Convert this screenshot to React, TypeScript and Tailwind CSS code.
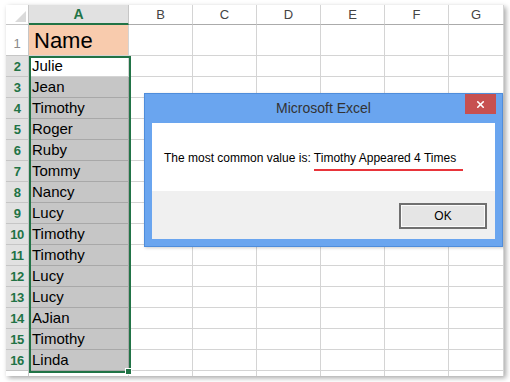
import { X } from "lucide-react";

const cols = ["A", "B", "C", "D", "E", "F", "G"];
const colW = ["w-[100px]", "w-[64px]", "w-[64px]", "w-[64px]", "w-[64px]", "w-[64px]", "w-[55px]"];

const names = [
  "Julie",
  "Jean",
  "Timothy",
  "Roger",
  "Ruby",
  "Tommy",
  "Nancy",
  "Lucy",
  "Timothy",
  "Timothy",
  "Lucy",
  "Lucy",
  "AJian",
  "Timothy",
  "Linda",
];

const font = { fontFamily: '"Liberation Sans", Arial, sans-serif' };

const HeaderRow = () => (
  <div className="flex h-[20px]">
    <div className="relative w-[23px] shrink-0 border-r border-b border-[#c6c6c6] bg-white">
      <div className="absolute right-[2px] bottom-[2px] h-0 w-0 border-l-[11px] border-t-[11px] border-l-transparent border-t-transparent border-b-[11px] border-b-[#dadada] border-r-0" />
    </div>
    {cols.map((c, i) =>
      c === "A" ? (
        <div
          key={c}
          className={`${colW[i]} shrink-0 flex items-center justify-center border-r border-[#c6c6c6] border-b-2 border-b-[#217346] bg-[#e1e1e1] text-[14px] font-bold text-[#217346]`}
        >
          {c}
        </div>
      ) : (
        <div
          key={c}
          className={`${colW[i]} shrink-0 flex items-center justify-center border-r border-b border-r-[#d4d4d4] border-b-[#ababab] bg-white text-[13px] text-[#444]`}
        >
          {c}
        </div>
      )
    )}
  </div>
);

const BlankCells = ({ h }: { h: string }) => (
  <>
    {colW.slice(1).map((w, i) => (
      <div key={i} className={`${w} ${h} shrink-0 border-r border-b border-[#d4d4d4] bg-white`} />
    ))}
  </>
);

export default function App() {
  return (
    <div className="h-[382px] w-[510px] bg-white pl-[6px] pt-[5px]" style={font}>
      <div className="relative h-[371px] w-[498px] overflow-hidden bg-white shadow-[2px_2px_5px_rgba(0,0,0,0.35)]">
        <HeaderRow />
        {/* row 1 */}
        <div className="flex h-[31px]">
          <div className="flex w-[23px] shrink-0 items-end justify-center border-r border-b border-[#c6c6c6] bg-white pb-[2px] text-[13px] text-[#8a8a8a]">
            1
          </div>
          <div className="flex w-[100px] shrink-0 items-end border-r border-b border-[#d4d4d4] bg-[#f8cbad] pl-[5px] text-[22px] leading-[28px] text-black">
            Name
          </div>
          <BlankCells h="h-[31px]" />
        </div>
        {names.map((n, i) => (
          <div key={i} className="flex h-[21px]">
            <div className="flex w-[23px] shrink-0 items-center justify-center border-r border-b border-[#c6c6c6] bg-[#e1e1e1] pt-[1px] text-[13px] font-bold tracking-[-0.5px] text-[#217346]">
              {i + 2}
            </div>
            <div
              className={`flex w-[100px] shrink-0 items-center border-r border-b pl-[3px] pt-[1px] text-[15px] text-black ${
                i === 0 ? "border-[#d4d4d4] bg-white" : "border-[#a8a8a8] bg-[#c6c6c6]"
              }`}
            >
              {n}
            </div>
            <BlankCells h="h-[21px]" />
          </div>
        ))}
        <div className="flex h-[10px]">
          <div className="w-[23px] shrink-0 border-r border-[#c6c6c6] bg-white" />
          {colW.map((w, i) => (
            <div key={i} className={`${w} shrink-0 border-r border-[#d4d4d4] bg-white`} />
          ))}
        </div>

        {/* selection */}
        <div className="pointer-events-none absolute left-[23px] top-[51px] h-[317px] w-[102px] border-2 border-[#217346]" />
        <div className="absolute left-[119px] top-[363px] h-[7px] w-[7px] border border-white bg-[#217346]" />

        {/* dialog */}
        <div className="absolute left-[138px] top-[88px] flex h-[154px] w-[359px] flex-col border border-[#4f8ddb] bg-[#6aa5ef] shadow-[1px_1px_3px_rgba(0,0,0,0.2)]">
          <div className="relative flex h-[29px] shrink-0 items-center justify-center text-[14px] text-[#333]">
            Microsoft Excel
            <div className="absolute right-[6px] top-0 flex h-[20px] w-[31px] items-center justify-center bg-[#c75050] text-white">
              <X size={11} strokeWidth={3.5} />
            </div>
          </div>
          <div className="mx-[7px] flex h-[68px] shrink-0 bg-white pl-[12px] pt-[27px]">
            <div className="text-[12px] leading-[16px] text-black">
              The most common value is:{" "}
              <span className="border-b-2 border-[#e8343a] pb-[4px] pr-[7px]">Timothy Appeared 4 Times</span>
            </div>
          </div>
          <div className="mx-[7px] flex h-[48px] shrink-0 justify-end bg-[#f0f0f0] pr-[8px] pt-[12px]">
            <div className="flex h-[26px] w-[88px] items-center justify-center border-2 border-[#707070] bg-[#e5e5e5] text-[12px] text-black shadow-[inset_0_0_0_1px_#fcfcfc]">
              OK
            </div>
          </div>
        </div>
      </div>
    </div>
  );
}
